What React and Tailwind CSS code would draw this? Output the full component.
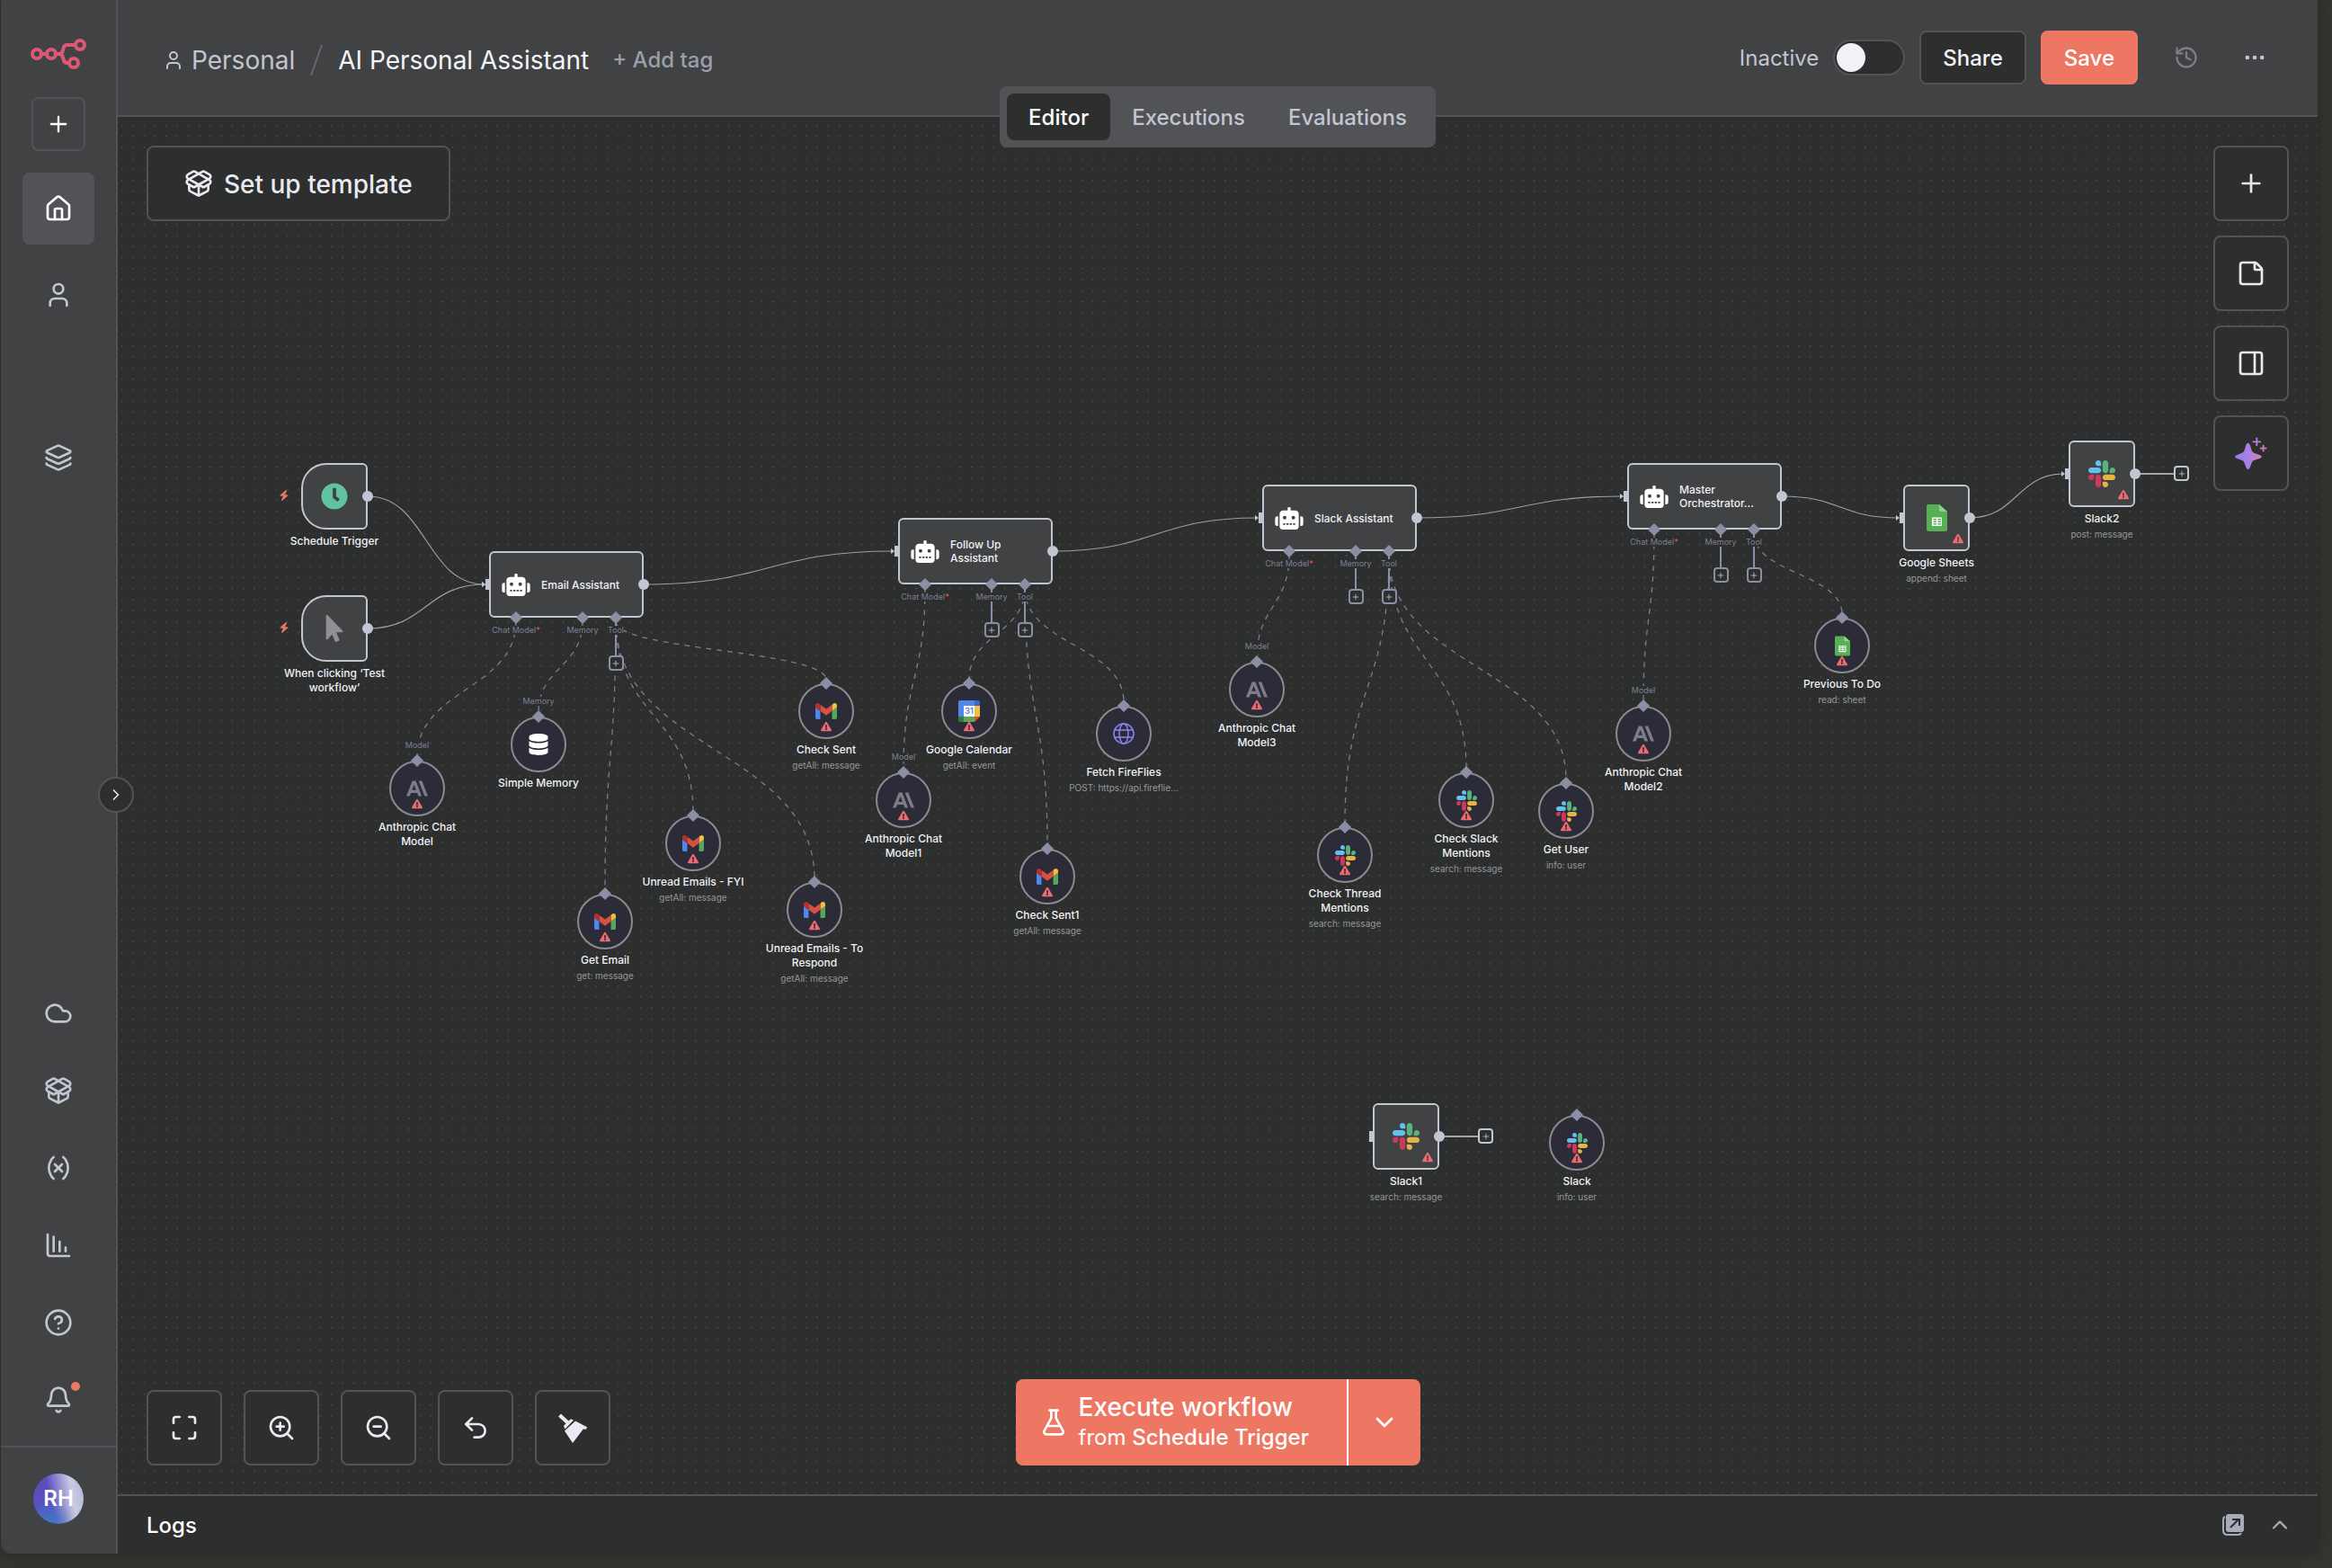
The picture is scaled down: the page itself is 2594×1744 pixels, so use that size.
import React, { useState } from 'react';
import {
  Bell, ChartColumnDecreasing, ChevronDown, ChevronRight, ChevronUp, CircleQuestionMark, Cloud, Ellipsis,
  FlaskConical, History, House, Layers, Maximize, PackageOpen, PanelRight, Plus, StickyNote, Undo2, User,
  Variable, ZoomIn, ZoomOut,
} from 'lucide-react';
import { FaClock, FaDatabase, FaExclamationTriangle, FaMousePointer } from 'react-icons/fa';
import { FaBolt } from 'react-icons/fa6';

// ---- icons ----

function Logo() {
  return (
    <svg viewBox="0 0 62 34" className="w-[62px] h-[34px]" fill="none" stroke="#dd5877" strokeWidth="4">
      <circle cx="7" cy="17" r="5" />
      <circle cx="23" cy="17" r="5" />
      <circle cx="55" cy="7" r="5" />
      <circle cx="48" cy="27" r="5" />
      <path d="M12 17h6M28 17h3.500c2.500 0 4-1.500 4.500-4l.4-2c.5-2.600 2-4 4.500-4H50M31 17c3 0 4.500 1.600 5 4l.5 2c.5 2.600 2 4 4.500 4h2" />
    </svg>
  );
}

function Robot() {
  return (
    <svg viewBox="0 0 94 75" className="w-8 h-[25px] shrink-0" fill="#ffffff">
      <rect x="42" y="0" width="10" height="16" rx="4" />
      <path fillRule="evenodd" d="M26 11h42q11 1 11 13v40q0 11-11 11H26q-11 0-11-11V24q0-12 11-13ZM32 29a6 6 0 1 0 0 12a6 6 0 1 0 0-12ZM61 29a6 6 0 1 0 0 12a6 6 0 1 0 0-12ZM27 54v5h7v-5ZM38 54v5h7v-5ZM49 54v5h7v-5ZM60 54v5h7v-5Z" />
      <path d="M10 31v32H7q-7 0-7-7V38q0-7 7-7ZM84 31v32h3q7 0 7-7V38q0-7-7-7Z" />
    </svg>
  );
}

function Slack({ className }) {
  return (
    <svg viewBox="0 0 122.800 122.800" className={className}>
      <path fill="#cf375b" d="M25.800 77.600c0 7.100-5.800 12.900-12.900 12.900S0 84.700 0 77.600s5.800-12.900 12.900-12.900h12.900v12.900zm6.500 0c0-7.100 5.800-12.900 12.900-12.900s12.900 5.800 12.900 12.900v32.300c0 7.100-5.800 12.900-12.900 12.900s-12.900-5.800-12.900-12.900V77.600z" />
      <path fill="#62c1ee" d="M45.200 25.800c-7.100 0-12.900-5.800-12.900-12.900S38.100 0 45.200 0s12.900 5.800 12.900 12.900v12.900H45.200zm0 6.500c7.100 0 12.900 5.800 12.900 12.900s-5.800 12.900-12.900 12.900H12.900C5.800 58.100 0 52.300 0 45.200s5.800-12.900 12.900-12.900h32.300z" />
      <path fill="#5ab27d" d="M97 45.200c0-7.100 5.800-12.900 12.900-12.900s12.900 5.800 12.900 12.900-5.800 12.900-12.900 12.900H97V45.200zm-6.500 0c0 7.100-5.800 12.900-12.900 12.900s-12.900-5.800-12.900-12.900V12.900C64.700 5.800 70.500 0 77.600 0s12.900 5.800 12.900 12.900v32.300z" />
      <path fill="#e6b347" d="M77.600 97c7.100 0 12.900 5.800 12.900 12.900s-5.800 12.900-12.900 12.900-12.900-5.800-12.900-12.900V97h12.900zm0-6.500c-7.100 0-12.900-5.800-12.900-12.900s5.800-12.900 12.900-12.900h32.300c7.100 0 12.900 5.800 12.900 12.900s-5.800 12.900-12.900 12.900H77.600z" />
    </svg>
  );
}

function Gmail() {
  return (
    <svg viewBox="52 42 88 66" className="w-6 h-[18px]">
      <path fill="#5087ec" d="M58 108h14V74L52 59v43c0 3.320 2.690 6 6 6" />
      <path fill="#58a55c" d="M120 108h14c3.320 0 6-2.690 6-6V59l-20 15" />
      <path fill="#f1bf42" d="M120 48v26l20-15v-8c0-7.420-8.470-11.650-14.400-7.200" />
      <path fill="#d85140" d="M72 74V48l24 18 24-18v26L96 92" />
      <path fill="#b73129" d="M52 51v8l20 15V48l-5.600-4.200c-5.940-4.450-14.400-.22-14.400 7.200" />
    </svg>
  );
}

function Anthropic() {
  return (
    <svg viewBox="0 0 24 24" className="w-6 h-6" fill="#7d7d87">
      <path d="M17.304 3.541h-3.672l6.696 16.918H24Zm-10.608 0L0 20.459h3.744l1.370-3.553h7.005l1.369 3.553h3.744L10.536 3.541Zm-.371 10.223 2.291-5.946 2.292 5.946Z" />
    </svg>
  );
}

function Calendar() {
  return (
    <svg viewBox="0 0 24 24" className="w-6 h-6">
      <path fill="#5087ec" d="M2 0h16v6H6v12H0V2q0-2 2-2Z" />
      <path fill="#3c67c5" d="M18 0h4q2 0 2 2v4h-6Z" />
      <path fill="#f1bf42" d="M18 6h6v12h-6Z" />
      <path fill="#58a55c" d="M6 18h12v6H6Z" />
      <path fill="#38793e" d="M0 18h6v6H2q-2 0-2-2Z" />
      <path fill="#d85140" d="M18 18h6l-6 6Z" />
      <path fill="#ffffff" d="M6 6h12v12H6Z" />
      <text x="12" y="15" textAnchor="middle" fontSize="9" fontWeight="600" fill="#4a7fe0">31</text>
    </svg>
  );
}

function Sheets({ className }) {
  return (
    <svg viewBox="0 0 46 60" className={className}>
      <path fill="#58b055" d="M4 0h24l18 16v40q0 4-4 4H4q-4 0-4-4V4q0-4 4-4Z" />
      <path fill="#91cf8f" d="M28 0l18 16H31q-3 0-3-3Z" />
      <path fill="#ffffff" fillRule="evenodd" d="M12 29h22v19H12ZM15 32v3h7v-3ZM25 32v3h7v-3ZM15 37v3h7v-3ZM25 37v3h7v-3ZM15 42v3h7v-3ZM25 42v3h7v-3Z" />
    </svg>
  );
}

function Globe() {
  return (
    <svg viewBox="0 0 24 24" className="w-6 h-6" fill="none" stroke="#8a85ee" strokeWidth="1.500">
      <circle cx="12" cy="12" r="11" />
      <ellipse cx="12" cy="12" rx="5" ry="11" />
      <path d="M2 8h20M2 16h20" />
    </svg>
  );
}

function Broom() {
  return (
    <svg viewBox="0 0 36 36" className="w-9 h-9" fill="currentColor">
      <path d="M2 5.500 5 2.500l8.500 8 2.500-2.200 3 1.200-9.500 10-1.500-3.500 2.500-2.700Z" />
      <path d="m21 10.500 13 6.800-1 2.500-3.200-.3L18 35 9 21.500Z" />
    </svg>
  );
}

function Sparkles() {
  return (
    <svg viewBox="0 0 37 37" className="w-9 h-9">
      <defs>
        <linearGradient id="ai" x1="0" y1="0" x2="1" y2="0">
          <stop offset="0" stopColor="#8f7bf0" />
          <stop offset="0.500" stopColor="#a87fe6" />
          <stop offset="1" stopColor="#d27fae" />
        </linearGradient>
      </defs>
      <path fill="url(#ai)" d="M15 7q1.500 0 2.200 2l2 6.500q.7 2 2.600 2.800l7 2.400q1.800.8 1.800 1.800t-1.800 1.800l-7 2.400q-1.900.8-2.600 2.800l-2 5.500q-.7 2-2.200 2t-2.200-2l-2-5.500q-.7-2-2.600-2.800l-6.500-2.400Q0 23.500 0 22.500t1.700-1.800l6.500-2.400q1.900-.8 2.600-2.800l2-6.500q.7-2 2.200-2Z" />
      <path fill="none" stroke="#b57be0" strokeWidth="2" strokeLinecap="round" d="M25 1.500v8M21 5.500h8" />
      <path fill="none" stroke="#d07bb8" strokeWidth="2" strokeLinecap="round" d="M32.500 10v6M29.500 13h6" />
    </svg>
  );
}

function PopOut() {
  return (
    <svg viewBox="0 0 24 24" className="w-6 h-6">
      <path d="M7 0h14q3 0 3 3v14q0 3-3 3H7q-3 0-3-3V3q0-3 3-3Z" fill="currentColor" />
      <path d="M3 3Q1 4 1 6v12q0 5 5 5h12q2 0 3-2" fill="none" stroke="currentColor" strokeWidth="2" />
      <path d="M9 15l9-9M11 6h8v7" fill="none" stroke="#2d2e2e" strokeWidth="2" />
    </svg>
  );
}

// ---- workflow data, in canvas pixels ----

const triggers = [
  { x: 204, y: 385, name: 'Schedule Trigger', icon: <FaClock className="w-[30px] h-[30px] text-[#61c2a1]" /> },
  { x: 204, y: 532, name: 'When clicking ‘Test workflow’', icon: <FaMousePointer className="w-[30px] h-[30px] text-[#8f9094]" /> },
];

const agents = [
  { x: 413, y: 483, name: 'Email Assistant', adds: [141] },
  { x: 868, y: 446, name: 'Follow Up Assistant', adds: [104, 141] },
  { x: 1273, y: 409, name: 'Slack Assistant', adds: [104, 141] },
  { x: 1679, y: 385, name: 'Master Orchestrator...', adds: [104, 141] },
];

const apps = [
  { x: 1986, y: 409, name: 'Google Sheets', sub: 'append: sheet', icon: <Sheets className="w-[23px] h-[30px]" /> },
  { x: 2170, y: 360, name: 'Slack2', sub: 'post: message', icon: <Slack className="w-[30px] h-[30px]" />, open: true },
  { x: 1396, y: 1097, name: 'Slack1', sub: 'search: message', icon: <Slack className="w-[30px] h-[30px]" />, open: true },
];

const smallSlack = <Slack className="w-[23px] h-[23px]" />;

// agent + port say where the dashed line starts
const tools = [
  { x: 333, y: 747, name: 'Anthropic Chat Model', label: 'Model', icon: <Anthropic />, agent: 0, port: 30, warn: true },
  { x: 468, y: 698, name: 'Simple Memory', label: 'Memory', icon: <FaDatabase className="w-6 h-6 text-white" />, agent: 0, port: 104 },
  { x: 788, y: 661, name: 'Check Sent', sub: 'getAll: message', icon: <Gmail />, agent: 0, port: 141, warn: true },
  { x: 640, y: 808, name: 'Unread Emails - FYI', sub: 'getAll: message', icon: <Gmail />, agent: 0, port: 141, warn: true },
  { x: 542, y: 895, name: 'Get Email', sub: 'get: message', icon: <Gmail />, agent: 0, port: 141, warn: true },
  { x: 775, y: 882, name: 'Unread Emails - To Respond', sub: 'getAll: message', icon: <Gmail />, agent: 0, port: 141, warn: true },
  { x: 947, y: 661, name: 'Google Calendar', sub: 'getAll: event', icon: <Calendar />, agent: 1, port: 141, warn: true },
  { x: 874, y: 760, name: 'Anthropic Chat Model1', label: 'Model', icon: <Anthropic />, agent: 1, port: 30, warn: true },
  { x: 1119, y: 686, name: 'Fetch FireFlies', sub: 'POST: https://api.fireflie...', icon: <Globe />, agent: 1, port: 141 },
  { x: 1034, y: 845, name: 'Check Sent1', sub: 'getAll: message', icon: <Gmail />, agent: 1, port: 141, warn: true },
  { x: 1267, y: 637, name: 'Anthropic Chat Model3', label: 'Model', icon: <Anthropic />, agent: 2, port: 30, warn: true },
  { x: 1365, y: 821, name: 'Check Thread Mentions', sub: 'search: message', icon: smallSlack, agent: 2, port: 141, warn: true },
  { x: 1500, y: 760, name: 'Check Slack Mentions', sub: 'search: message', icon: smallSlack, agent: 2, port: 141, warn: true },
  { x: 1611, y: 772, name: 'Get User', sub: 'info: user', icon: smallSlack, agent: 2, port: 141, warn: true },
  { x: 1697, y: 686, name: 'Anthropic Chat Model2', label: 'Model', icon: <Anthropic />, agent: 3, port: 30, warn: true },
  { x: 1918, y: 588, name: 'Previous To Do', sub: 'read: sheet', icon: <Sheets className="w-[17px] h-[23px]" />, agent: 3, port: 141, warn: true },
  { x: 1623, y: 1141, name: 'Slack', sub: 'info: user', icon: smallSlack, warn: true },
];

const links = [
  [278, 422, 413, 520],
  [278, 569, 413, 520],
  [585, 520, 868, 483],
  [1040, 483, 1273, 446],
  [1445, 446, 1679, 422],
  [1851, 422, 1986, 446],
  [2060, 446, 2170, 397],
];

// ---- canvas ----

function Edges() {
  return (
    <svg className="absolute inset-0 w-full h-full" fill="none">
      <defs>
        <pattern id="grid" width="16" height="16" patternUnits="userSpaceOnUse" patternTransform="translate(4 8.600) scale(0.767)">
          <circle cx="1" cy="1" r="0.850" fill="#636466" />
        </pattern>
      </defs>
      <rect width="100%" height="100%" fill="url(#grid)" />
      {links.map(([x1, y1, x2, y2]) => {
        const mid = (x1 + x2 - 5) / 2;
        const end = x2 - 5;
        return (
          <g key={`${x1}-${y1}`}>
            <path d={`M${x1} ${y1}C${mid} ${y1} ${mid} ${y2} ${end} ${y2}`} stroke="#9c9da6" strokeWidth="1.200" />
            <path d={`M${end - 3} ${y2 - 3}L${end + 1} ${y2}L${end - 3} ${y2 + 3}Z`} fill="#c3c5d3" />
          </g>
        );
      })}
      {tools.filter((t) => t.agent !== undefined).map((t) => {
        const a = agents[t.agent];
        const x1 = a.x + t.port;
        const y1 = a.y + 78;
        const y2 = t.y - 35;
        const mid = (y1 + y2) / 2;
        return (
          <path key={t.name} d={`M${x1} ${y1}C${x1} ${mid} ${t.x} ${mid} ${t.x} ${y2}`} stroke="#7c7c90" strokeWidth="1.300" strokeDasharray="6 6" />
        );
      })}
    </svg>
  );
}

function Warning({ className }) {
  return <FaExclamationTriangle className={`absolute w-3 h-3 text-[#ea6b70] ${className}`} />;
}

function Caption({ name, sub }) {
  return (
    <>
      <span className="mt-1 w-[122px] text-center text-xs font-medium leading-4 text-[#f0f1f6]">{name}</span>
      {sub && <span className="mt-px text-center text-[10px] leading-4 whitespace-nowrap text-[#95969f]">{sub}</span>}
    </>
  );
}

function AddBox({ className }) {
  return (
    <button aria-label="Add node" className={`flex w-[17px] h-[17px] items-center justify-center rounded-sm border-2 bg-[#2d2e2e] text-[#c3c5d3] ${className}`}>
      <Plus size={10} />
    </button>
  );
}

const Output = () => <span className="absolute -right-1.5 top-[31px] w-3 h-3 rounded-full bg-[#c3c5d3]" />;
const Input = () => <span className="absolute -left-1 top-[31px] w-1.5 h-3 bg-[#c3c5d3]" />;

function Trigger({ node }) {
  return (
    <div className="absolute flex w-[74px] flex-col items-center" style={{ left: node.x, top: node.y }}>
      <FaBolt className="absolute -left-[25px] top-[30px] w-3 h-3 text-[#e37563]" />
      <div className="relative mb-px flex w-[74px] h-[74px] items-center justify-center rounded-l-[28px] rounded-r-md border-2 border-[#c3c5d3] bg-[#414244]">
        {node.icon}
      </div>
      <Output />
      <Caption name={node.name} />
    </div>
  );
}

function AppNode({ node }) {
  return (
    <div className="absolute flex w-[74px] flex-col items-center" style={{ left: node.x, top: node.y }}>
      {node.open && (
        <div className="absolute left-[74px] top-[28px] flex items-center">
          <span className="w-[43px] h-0.5 bg-[#a3a4ae]" />
          <AddBox className="border-[#c3c5d3]" />
        </div>
      )}
      <div className="relative mb-px flex w-[74px] h-[74px] items-center justify-center rounded-md border-2 border-[#c3c5d3] bg-[#414244]">
        {node.icon}
        <Warning className="right-[5px] bottom-1.5" />
      </div>
      <Input />
      <Output />
      <Caption name={node.name} sub={node.sub} />
    </div>
  );
}

function Agent({ node }) {
  return (
    <div className="absolute w-[172px]" style={{ left: node.x, top: node.y }}>
      {node.adds.map((x) => (
        <div key={x} className="absolute top-[74px] flex w-[18px] flex-col items-center" style={{ left: x - 9 }}>
          <span className="w-0.5 h-[42px] bg-[#8d8ea4]" />
          <AddBox className="border-[#8d8ea4]" />
        </div>
      ))}
      <div className="flex h-[74px] items-center gap-3 rounded-md border-2 border-[#c3c5d3] bg-[#414244] pl-3">
        <Robot />
        <span className="w-[94px] text-xs font-medium leading-[15px] text-[#f0f1f6]">{node.name}</span>
      </div>
      <Input />
      <Output />
      <Port x={30}>Chat Model<span className="text-[#ea5f66]">*</span></Port>
      <Port x={104}>Memory</Port>
      <Port x={141}>Tool</Port>
    </div>
  );
}

function Port({ x, children }) {
  return (
    <div className="absolute top-[69px] flex w-16 flex-col items-center" style={{ left: x - 32 }}>
      <span className="w-2.5 h-2.5 rotate-45 bg-[#8d8ea4]" />
      <span className="mt-1 bg-[#2d2e2e] text-[9px] leading-[10px] whitespace-nowrap text-[#7f8095]">{children}</span>
    </div>
  );
}

function Tool({ node }) {
  return (
    <div className="absolute flex w-[122px] flex-col items-center" style={{ left: node.x - 61, top: node.y - 31 }}>
      {node.label && <span className="absolute -top-[22px] bg-[#2d2e2e] text-[9px] leading-[10px] text-[#7f8095]">{node.label}</span>}
      <div className="relative flex w-[62px] h-[62px] items-center justify-center rounded-full border-2 border-[#8b8b90] bg-[#2c2b38]">
        {node.icon}
        {node.warn && <Warning className="bottom-1.5" />}
      </div>
      <span className="absolute -top-[5px] w-2.5 h-2.5 rotate-45 bg-[#8d8ea4]" />
      <Caption name={node.name} sub={node.sub} />
    </div>
  );
}

function CanvasButton({ label, children }) {
  return (
    <button aria-label={label} className="flex w-21 h-21 items-center justify-center rounded-lg border-2 border-[#525356] bg-[#2d2e2e] text-[#e9eaf2]">
      {children}
    </button>
  );
}

function Canvas() {
  return (
    <section className="relative flex-1 overflow-hidden bg-[#2d2e2e]">
      <Edges />
      {triggers.map((n) => <Trigger key={n.name} node={n} />)}
      {agents.map((n) => <Agent key={n.name} node={n} />)}
      {apps.map((n) => <AppNode key={n.name} node={n} />)}
      {tools.map((n) => <Tool key={n.name} node={n} />)}

      <button className="absolute left-8 top-8 flex h-21 items-center gap-3 rounded-lg border-2 border-[#525356] bg-[#2d2e2e] px-10 text-[28px] font-medium text-[#e9eaf2]">
        <PackageOpen size={32} />
        <span className="pt-0.5">Set up template</span>
      </button>

      <div className="absolute right-8 top-8 flex flex-col gap-4">
        <CanvasButton label="Add node"><Plus size={32} /></CanvasButton>
        <CanvasButton label="Add sticky note"><StickyNote size={32} /></CanvasButton>
        <CanvasButton label="Open panel"><PanelRight size={32} /></CanvasButton>
        <CanvasButton label="Ask AI"><Sparkles /></CanvasButton>
      </div>

      <div className="absolute left-8 bottom-8 flex gap-6">
        <CanvasButton label="Fit view"><Maximize size={32} /></CanvasButton>
        <CanvasButton label="Zoom in"><ZoomIn size={32} /></CanvasButton>
        <CanvasButton label="Zoom out"><ZoomOut size={32} /></CanvasButton>
        <CanvasButton label="Undo"><Undo2 size={32} /></CanvasButton>
        <CanvasButton label="Tidy up"><Broom /></CanvasButton>
      </div>

      <div className="absolute inset-x-0 bottom-8 mx-auto flex h-24 w-[450px] overflow-hidden rounded-lg bg-[#ee7763] text-white">
        <button className="flex flex-1 items-center gap-3 pl-[26px] text-left">
          <FlaskConical size={32} />
          <span className="flex flex-col pb-0.5">
            <span className="text-[28px] font-medium leading-9">Execute workflow</span>
            <span className="text-2xl leading-8">from <span className="font-medium">Schedule Trigger</span></span>
          </span>
        </button>
        <button aria-label="Choose trigger" className="flex w-[82px] items-center justify-center border-l-2 border-white">
          <ChevronDown size={32} />
        </button>
      </div>
    </section>
  );
}

// ---- shell ----

function NavItem({ label, active, children }) {
  return (
    <a href="#" aria-label={label} className={`relative flex w-20 h-20 items-center justify-center rounded-lg ${active ? 'bg-[#525356] text-white' : 'text-[#c3c5d3]'}`}>
      {children}
    </a>
  );
}

function Sidebar() {
  return (
    <aside className="relative z-10 flex w-[130px] shrink-0 flex-col rounded-bl-xl border-r-2 border-[#525356] bg-[#414244]">
      <div className="flex flex-1 flex-col items-center pt-[43px]">
        <Logo />
        <button aria-label="Create" className="mt-[31px] mb-6 flex w-15 h-15 items-center justify-center rounded-lg border-2 border-[#525356] text-white">
          <Plus size={28} />
        </button>
        <nav className="flex flex-1 flex-col items-center pb-[11px]">
          <NavItem label="Overview" active><House size={32} /></NavItem>
          <div className="mt-4"><NavItem label="Personal"><User size={32} /></NavItem></div>
          <div className="mt-[101px]"><NavItem label="Projects"><Layers size={32} /></NavItem></div>
          <div className="mt-auto flex flex-col gap-1.5">
            <NavItem label="Admin Panel"><Cloud size={32} /></NavItem>
            <NavItem label="Templates"><PackageOpen size={32} /></NavItem>
            <NavItem label="Variables"><Variable size={32} /></NavItem>
            <NavItem label="Insights"><ChartColumnDecreasing size={32} /></NavItem>
            <NavItem label="Help"><CircleQuestionMark size={32} /></NavItem>
            <NavItem label="What's New">
              <Bell size={32} />
              <span className="absolute right-4 top-5 w-2.5 h-2.5 rounded-full bg-[#ee7763]" />
            </NavItem>
          </div>
        </nav>
      </div>
      <div className="flex h-30 justify-center border-t-2 border-[#525356] pt-[29px]">
        <button className="flex w-14 h-14 items-center justify-center rounded-full bg-[radial-gradient(circle_at_30%_100%,#3b7cc4_0%,transparent_40%),linear-gradient(80deg,#5b4fc0_35%,#c9cbe0_75%,#aab8d8_100%)] text-2xl font-semibold text-white">
          RH
        </button>
      </div>
      <button aria-label="Expand sidebar" className="absolute -right-5 top-[864px] flex w-10 h-10 items-center justify-center rounded-full border-2 border-[#525356] bg-[#2d2e2e] text-[#e9eaf2]">
        <ChevronRight size={20} />
      </button>
    </aside>
  );
}

const tabs = ['Editor', 'Executions', 'Evaluations'];

function Header() {
  const [tab, setTab] = useState('Editor');
  const [active, setActive] = useState(false);

  return (
    <header className="relative z-10 flex h-[130px] items-center justify-between border-b-2 border-[#525356] bg-[#414244] pl-[50px] pr-14">
      <div className="flex items-center pt-1.5 text-[28px] leading-9">
        <a href="#" className="flex items-center gap-2 text-[#c3c5d3]">
          <User size={24} />
          Personal
        </a>
        <svg viewBox="0 0 16 36" className="mx-4 w-4 h-9" stroke="#67686c" strokeWidth="2"><path d="M14 1L2 35" /></svg>
        <h1 className="text-[#f4f5fa]">AI Personal Assistant</h1>
        <button className="ml-[26px] text-2xl font-medium text-[#9c9ead]">+ Add tag</button>
      </div>

      <div className="flex items-center gap-4 text-2xl">
        <label htmlFor="active" className="pt-0.5 text-[#c3c5d3]">Inactive</label>
        <span className="relative flex">
          <input
            id="active"
            type="checkbox"
            role="switch"
            checked={active}
            onChange={(e) => setActive(e.target.checked)}
            className="peer w-20 h-10 appearance-none rounded-full border-2 border-[#525356] bg-[#2d2e2e]"
          />
          <span className="pointer-events-none absolute left-1 top-1 w-8 h-8 rounded-full bg-[#f1f2f8] peer-checked:left-11" />
        </span>
        <button className="h-15 rounded-lg border-2 border-[#525356] bg-[#2d2e2e] px-6 pt-0.5 font-medium text-[#f1f2f8]">Share</button>
        <button className="h-15 rounded-lg bg-[#ee7763] px-[26px] pt-0.5 font-medium text-white">Save</button>
        <button aria-label="History" className="ml-6 text-[#7c7d82]"><History size={28} /></button>
        <button aria-label="More" className="ml-8 text-[#c3c5d3]"><Ellipsis size={28} /></button>
      </div>

      <div className="absolute inset-x-0 top-24 mx-auto flex w-fit rounded-lg bg-[#525356] p-2 text-2xl font-medium">
        {tabs.map((t) => (
          <button
            key={t}
            onClick={() => setTab(t)}
            className={`h-13 rounded-lg px-6 pt-0.5 ${t === tab ? 'bg-[#2d2e2e] text-white' : 'text-[#c3c5d3]'}`}
          >
            {t}
          </button>
        ))}
      </div>
    </header>
  );
}

export default function App() {
  return (
    <div className="h-screen bg-[#353430] pb-4 pl-px pr-4 font-['Inter',sans-serif]">
      <div className="flex h-full rounded-b-xl shadow-[0_0_14px_#242424]">
        <Sidebar />
        <main className="flex min-w-0 flex-1 flex-col">
          <Header />
          <Canvas />
          <footer className="flex h-[66px] items-center justify-between rounded-br-xl border-t-2 border-[#525356] bg-[#2d2e2e] pl-8 pr-7 text-white">
            <h2 className="pt-0.5 text-2xl font-medium">Logs</h2>
            <div className="flex items-center gap-[26px] text-[#a9abb9]">
              <button aria-label="Pop out"><PopOut /></button>
              <button aria-label="Open logs"><ChevronUp size={28} /></button>
            </div>
          </footer>
        </main>
      </div>
    </div>
  );
}
